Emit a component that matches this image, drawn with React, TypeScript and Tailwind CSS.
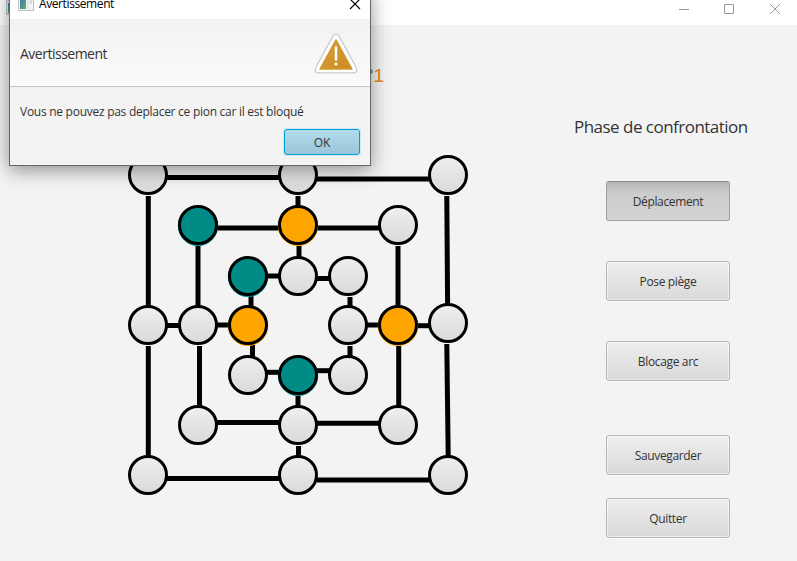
import React from "react";

type Fill = "free" | "teal" | "orange";

const nodes: [number, number, Fill][] = [
  [148, 175, "free"], [298, 175, "free"], [448, 175, "free"],
  [198, 225, "teal"], [298, 225, "orange"], [398, 225, "free"],
  [248, 276, "teal"], [298, 276, "free"], [348, 276, "free"],
  [148, 325, "free"], [198, 325, "free"], [248, 325, "orange"],
  [348, 325, "free"], [398, 325, "orange"], [448, 323, "free"],
  [248, 375, "free"], [298, 375, "teal"], [348, 375, "free"],
  [198, 425, "free"], [298, 425, "free"], [398, 425, "free"],
  [148, 475, "free"], [298, 475, "free"], [448, 475, "free"],
];

const edges: [number, number, number, number][] = [
  [167, 177.5, 280, 177.5], [317, 179, 429, 179],
  [217, 228, 280, 228], [317, 228, 379, 228],
  [267, 276, 280, 276], [317, 278.5, 330, 278.5],
  [167, 325.5, 180, 325.5], [217, 325, 230, 325],
  [367, 325, 380, 325], [417, 325.7, 430, 325.7],
  [267, 372.3, 280, 372.3], [317, 370.7, 330, 370.7],
  [217, 422.5, 280, 422.5], [317, 423.3, 380, 423.3],
  [167, 478.5, 280, 478.5], [317, 480, 430, 480],
  [148.3, 196, 148.3, 306], [148.3, 346, 148.3, 456],
  [198, 246, 198, 306], [199.5, 346, 199.5, 406],
  [251, 296, 251, 306], [252.5, 345, 252.5, 356],
  [298, 196, 298, 206], [299, 246, 299, 257],
  [298, 396, 298, 406], [298.5, 446, 298.5, 456],
  [350, 297, 350, 306], [350, 346, 350, 356],
  [398, 246, 398, 306], [398.7, 346, 398.7, 406],
  [446.8, 196, 447.6, 304], [446.8, 344, 448.2, 456],
];

const fills: Record<Fill, string> = { free: "url(#free)", teal: "#008b87", orange: "#ffa500" };

function Board() {
  return (
    <svg className="block h-[536px] w-[520px] shrink-0" viewBox="0 25 520 536">
      <defs>
        <linearGradient id="free" x1="0" y1="0" x2="0" y2="1">
          <stop offset="0" stopColor="#efefef" />
          <stop offset="1" stopColor="#d9d9d9" />
        </linearGradient>
      </defs>
      {edges.map(([x1, y1, x2, y2], i) => (
        <line key={i} x1={x1} y1={y1} x2={x2} y2={y2} stroke="#000" strokeWidth="5" />
      ))}
      {nodes.map(([x, y, fill], i) => (
        <g key={i}>
          {fill !== "free" && <circle cx={x} cy={y + 0.8} r="20.2" fill={fills[fill]} />}
          <circle cx={x} cy={y} r="18.5" fill={fills[fill]} stroke="#000" strokeWidth="3" />
        </g>
      ))}
    </svg>
  );
}

function AppIcon() {
  return (
    <svg className="h-4 w-4 shrink-0" viewBox="0 0 16 16">
      <defs>
        <linearGradient id="pane" x1="0" y1="0" x2="1" y2="1">
          <stop offset="0" stopColor="#4677a6" />
          <stop offset="1" stopColor="#51b078" />
        </linearGradient>
      </defs>
      <path d="M.5.5h15v14H.5z" fill="#f4f4f4" stroke="#bcbfc4" />
      <path d="M2 3h6v10H2z" fill="url(#pane)" />
      <path d="M9 3h2v10H9z" fill="#dce6e2" />
      <path d="M12 3h2v5h-2z" fill="#c9ddd5" />
    </svg>
  );
}

function GameButton({ label, pressed = false, className = "" }: { label: string; pressed?: boolean; className?: string }) {
  return (
    <button
      className={`h-10 w-[124px] shrink-0 rounded-[3px] border pt-px text-[12px] tracking-[-0.35px] text-[#333] ${
        pressed
          ? "border-[#a0a0a0] border-t-[#8c8c8c] bg-linear-to-b from-[#b5b5b5] via-[#cccccc] via-30% to-[#d3d3d3]"
          : "border-[#b5b5b5] bg-linear-to-b from-[#eeeeee] to-[#d9d9d9] shadow-[inset_0_0_0_1px_rgba(255,255,255,0.5),0_1px_0_#fafafa]"
      } ${className}`}
    >
      {label}
    </button>
  );
}

function WarningDialog() {
  return (
    <section className="absolute -top-[12px] left-[9px] flex h-[178px] w-[362px] flex-col border border-[#686868] bg-[#f3f3f3] shadow-[0_4px_18px_rgba(0,0,0,0.42)]">
      <header className="flex h-[30px] shrink-0 items-center bg-white pl-2">
        <AppIcon />
        <span className="ml-[5px] text-[12px] tracking-[-0.4px] text-black">Avertissement</span>
        <svg className="mr-[9px] ml-auto h-[12px] w-[12px]" viewBox="0 0 12 12">
          <path d="M1 1l10 10M11 1L1 11" stroke="#000" strokeWidth="1.1" />
        </svg>
      </header>
      <div className="flex h-[68px] shrink-0 items-center border-b border-[#c4c4c4] bg-linear-to-b from-[#f2f2f2] to-[#fbfbfb] pl-[10px]">
        <span className="pt-px text-[14px] tracking-[-0.5px] text-[#333]">Avertissement</span>
        <svg className="mr-3 ml-auto h-[42px] w-[44px]" viewBox="0 0 44 42">
          <defs>
            <linearGradient id="warn" x1="0" y1="0" x2="1" y2="1">
              <stop offset="0" stopColor="#dba03c" />
              <stop offset="1" stopColor="#c98c22" />
            </linearGradient>
          </defs>
          <path d="M19.2 3.6Q22 .1 24.8 3.6L42.5 36Q43.8 40.8 39.8 40.9H4.2Q.2 40.8 1.5 36Z" fill="#fff" stroke="#cbcbcb" strokeWidth="1.3" />
          <path d="M22 7.8L38 37H6Z" fill="url(#warn)" stroke="#d3982f" strokeWidth="1.4" strokeLinejoin="round" />
          <path d="M22 15.5V27.5" stroke="#fff" strokeWidth="2.5" strokeLinecap="round" />
          <circle cx="22" cy="32" r="1.6" fill="#fff" />
        </svg>
      </div>
      <p className="mt-[16px] ml-[10px] text-[12px] leading-[18px] tracking-[-0.27px] whitespace-nowrap text-[#333]">
        Vous ne pouvez pas deplacer ce pion car il est bloqué
      </p>
      <button className="mt-[8px] mr-[10px] h-[26px] w-[76px] self-end rounded-[3px] border-[1.5px] border-[#039ed3] bg-linear-to-b from-[#b2dbec] to-[#9ac6d9] pt-px text-[12px] text-[#333] shadow-[0_0_0_1px_rgba(3,158,211,0.15)]">
        OK
      </button>
    </section>
  );
}

export default function App() {
  return (
    <main className="relative flex h-[561px] w-[797px] flex-col overflow-hidden bg-[#f3f3f3] font-['Open_Sans','Noto_Sans',sans-serif]">
      <header className="flex h-[25px] shrink-0 items-start bg-white pl-[6px]">
        <AppIcon />
        <svg className="ml-auto h-[20px] w-[119px]" viewBox="678 0 119 20" fill="none" stroke="#999">
          <path d="M679 9.5h10M724.5 4.5h9v9h-9zM770 4l10 10M780 4L770 14" />
        </svg>
      </header>
      <div className="flex">
        <Board />
        <aside className="flex w-[277px] flex-col items-center pl-[19px]">
          <h1 className="mt-[89px] ml-[35px] h-[26px] self-start text-[17px] leading-[26px] tracking-[-0.52px] whitespace-nowrap text-[#333]">Phase de confrontation</h1>
          <GameButton label="Déplacement" pressed className="mt-[41px]" />
          <GameButton label="Pose piège" className="mt-10" />
          <GameButton label="Blocage arc" className="mt-10" />
          <GameButton label="Sauvegarder" className="mt-[54px]" />
          <GameButton label="Quitter" className="mt-[23px]" />
        </aside>
      </div>
      <div className="absolute top-[64px] left-[366px] font-['Liberation_Sans',sans-serif] text-[19px] leading-[24px] text-[#f08018]">
        <span className="text-[#335577]">°</span>1
      </div>
      <WarningDialog />
    </main>
  );
}
